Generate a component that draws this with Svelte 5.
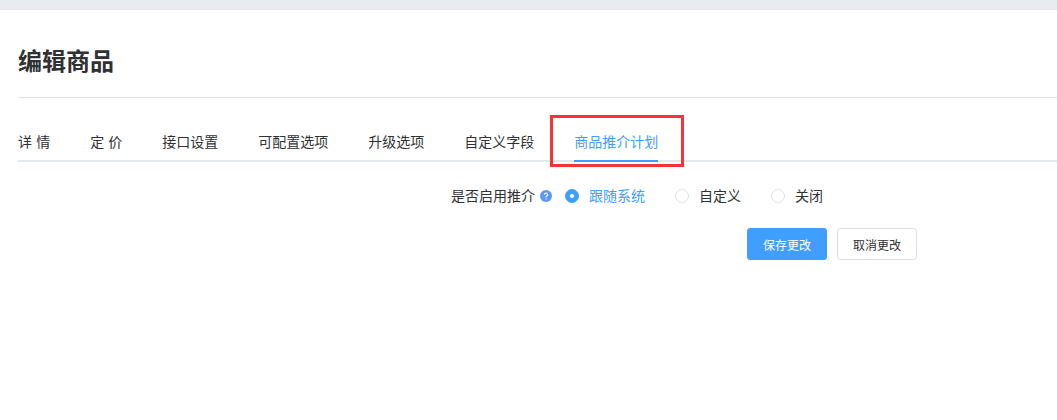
<script>
  const tabs = ['详 情', '定 价', '接口设置', '可配置选项', '升级选项', '自定义字段', '商品推介计划'];
  const options = ['跟随系统', '自定义', '关闭'];
</script>

<div class="page">
  <div class="topbar"></div>
  <main class="content">
    <h1 class="title">编辑商品</h1>
    <nav class="tabs">
      {#each tabs as tab, i}
        <div class="tab" class:active={i === tabs.length - 1}>{tab}</div>
      {/each}
      <div class="highlight"></div>
    </nav>
    <form class="form">
      <div class="row">
        <span class="label">是否启用推介</span>
        <svg class="help" viewBox="0 0 12 12" width="12" height="12" aria-hidden="true">
          <circle cx="6" cy="6" r="6" fill="#5b96f9" />
          <path d="M4.4 4.7a1.6 1.6 0 1 1 2.5 1.3c-.6.4-.9.6-.9 1.2" fill="none" stroke="#fff" stroke-width="1.1" />
          <circle cx="6" cy="9" r=".7" fill="#fff" />
        </svg>
        <div class="radios">
          {#each options as opt, i}
            <div class="radio" class:checked={i === 0}>
              <span class="dot"></span>
              <span>{opt}</span>
            </div>
          {/each}
        </div>
      </div>
      <div class="actions">
        <button type="button" class="btn primary">保存更改</button>
        <button type="button" class="btn">取消更改</button>
      </div>
    </form>
  </main>
</div>

<style>
  :global(body) {
    margin: 0;
    background: #fff;
    font-family: "Noto Sans CJK SC", "Liberation Sans", sans-serif;
    color: #333;
  }
  .page {
    height: 420px;
    overflow: hidden;
  }
  .topbar {
    height: 10px;
    background: #e9ebf1;
  }
  .content {
    padding: 0 0 0 18px;
  }
  .title {
    margin: 0;
    height: 88px;
    line-height: 100px;
    box-sizing: border-box;
    border-bottom: 1px solid #dfe1e6;
    font-size: 24px;
    font-weight: 700;
    color: #303133;
  }
  .tabs {
    position: relative;
    display: flex;
    gap: 40px;
    height: 64px;
    align-items: flex-end;
    box-sizing: border-box;
    border-bottom: 2px solid #e4e7ed;
  }
  .tab {
    height: 40px;
    line-height: 38px;
    font-size: 14px;
    margin-bottom: -2px;
    box-sizing: border-box;
    color: #303133;
    word-spacing: 1px;
  }
  .tab.active {
    color: #409eff;
    border-bottom: 2px solid #409eff;
  }
  .highlight {
    position: absolute;
    left: 532px;
    top: 17px;
    width: 134px;
    height: 52px;
    box-sizing: border-box;
    border: 3px solid #f33535;
  }
  .form {
    margin: 22px 0 0 433px;
    width: 466px;
    font-size: 14px;
  }
  .row {
    display: flex;
    align-items: center;
    height: 22px;
  }
  .label {
    color: #303133;
    width: 84px;
    white-space: nowrap;
  }
  .help {
    margin-left: 5px;
    margin-top: 2px;
  }
  .radios {
    display: flex;
    gap: 30px;
    margin-left: 13px;
  }
  .radio {
    display: flex;
    align-items: center;
    gap: 10px;
    color: #303133;
  }
  .dot {
    width: 14px;
    height: 14px;
    margin-top: 2px;
    box-sizing: border-box;
    border: 1px solid #dcdfe6;
    border-radius: 50%;
    position: relative;
  }
  .radio.checked {
    color: #409eff;
  }
  .radio.checked .dot {
    background: #409eff;
    border-color: #409eff;
  }
  .radio.checked .dot::after {
    content: "";
    position: absolute;
    left: 4px;
    top: 4px;
    width: 4px;
    height: 4px;
    border-radius: 50%;
    background: #fff;
  }
  .actions {
    display: flex;
    justify-content: flex-end;
    gap: 10px;
    margin-top: 22px;
  }
  .btn {
    width: 80px;
    height: 32px;
    padding: 0;
    border: 1px solid #dcdfe6;
    border-radius: 3px;
    background: #fff;
    color: #303133;
    font-family: inherit;
    font-size: 12px;
  }
  .btn.primary {
    background: #409eff;
    border-color: #409eff;
    color: #fff;
  }
</style>
